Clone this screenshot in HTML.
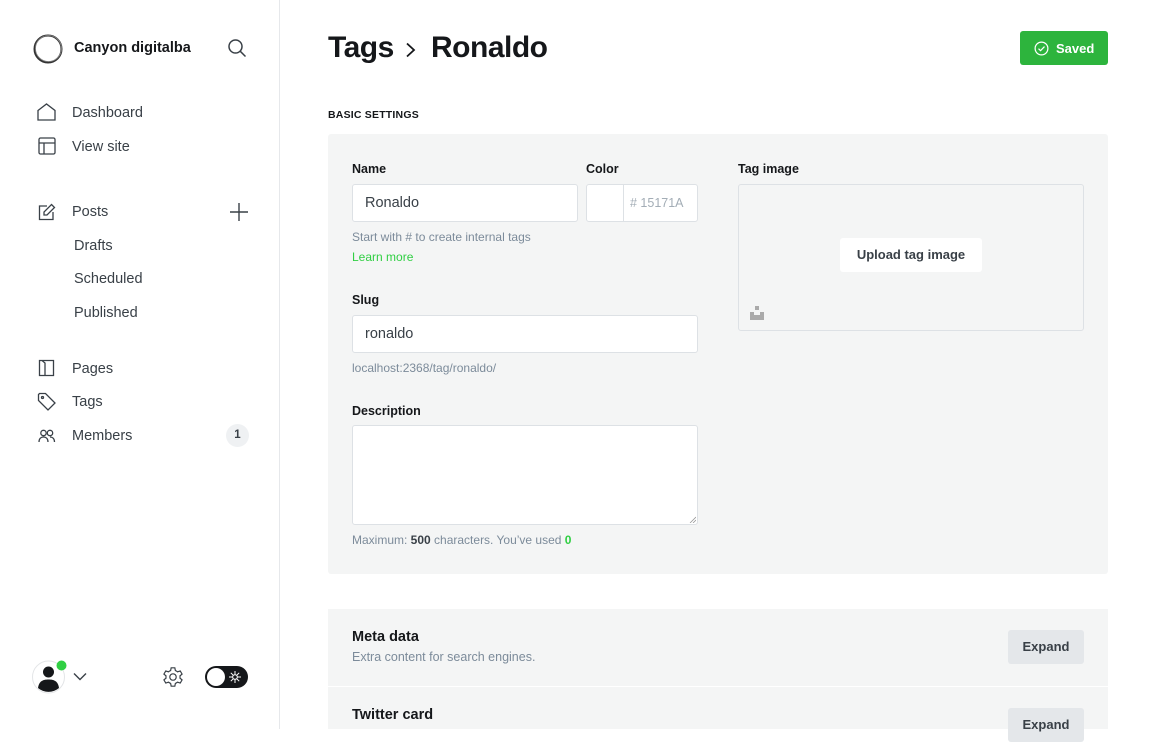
<!DOCTYPE html>
<html><head><meta charset="utf-8"><style>
*{box-sizing:border-box;margin:0;padding:0}
body{width:1156px;height:729px;overflow:hidden;background:#fff;font-family:"Liberation Sans",sans-serif;color:#15171a;position:relative}
.side{position:absolute;left:0;top:0;width:280px;height:729px;border-right:1px solid #e6e8eb}
.abs{position:absolute}
.nav{position:absolute;left:72px;font-size:14.5px;color:#394047}
.sub{position:absolute;left:74px;font-size:14.5px;color:#394047}
svg.i{position:absolute;fill:none;stroke:#394047;stroke-width:1.3}
.lbl{position:absolute;font-size:12.5px;font-weight:bold;color:#15171a}
.inp{position:absolute;background:#fff;border:1px solid #dde1e5;border-radius:3px;font-size:14.5px;color:#394047;padding-left:12px;display:flex;align-items:center}
.hint{position:absolute;font-size:12px;color:#7c8b9a}
</style></head><body>
<div class="side">
  <svg class="abs" style="left:32px;top:33px" width="32" height="32" viewBox="0 0 32 32"><circle cx="16" cy="16" r="13.5" fill="none" stroke="#333" stroke-width="2"/><circle cx="16.5" cy="15.5" r="13" fill="none" stroke="#888" stroke-width="0.8"/></svg>
  <div class="abs" style="left:74px;top:40px;font-size:14.5px;font-weight:bold">Canyon digitalba</div>
  <svg class="i" style="left:227px;top:38px" width="20" height="20" viewBox="0 0 20 20"><circle cx="8.5" cy="8.5" r="6.5" stroke-width="1.5"/><path d="M13.3 13.3L18.5 18.5" stroke-width="1.5"/></svg>

  <svg class="i" style="left:37px;top:103px" width="19" height="18" viewBox="0 0 19 18"><path d="M1 7.5L9.5 1L18 7.5V17H1Z"/></svg>
  <div class="nav" style="top:105px">Dashboard</div>
  <svg class="i" style="left:38px;top:137px" width="18" height="18" viewBox="0 0 18 18"><rect x="1" y="1" width="16" height="16" rx="1.5"/><path d="M1 6H17M6 6V17"/></svg>
  <div class="nav" style="top:139px">View site</div>

  <svg class="i" style="left:38px;top:203px" width="18" height="18" viewBox="0 0 18 18"><path d="M9 3H1.5V16.5H15V9"/><path d="M13.5 1.5L16.5 4.5L9 12H6V9Z"/></svg>
  <div class="nav" style="top:204px">Posts</div>
  <svg class="i" style="left:229px;top:202px" width="20" height="20" viewBox="0 0 20 20"><path d="M10 1V19M1 10H19" stroke-width="1.4"/></svg>
  <div class="sub" style="top:238px">Drafts</div>
  <div class="sub" style="top:271px">Scheduled</div>
  <div class="sub" style="top:305px">Published</div>

  <svg class="i" style="left:38px;top:359px" width="17" height="18" viewBox="0 0 17 18"><path d="M1.5 1.5H15.5V16.5H1.5Z"/><path d="M4 1.5L7 4V17"/></svg>
  <div class="nav" style="top:361px">Pages</div>
  <svg class="i" style="left:37px;top:392px" width="20" height="20" viewBox="0 0 20 20"><path d="M1.5 2.5V8.5L11 18L18 11L8.5 1.5H2.5Z"/><circle cx="5.5" cy="5.5" r="1"/></svg>
  <div class="nav" style="top:394px">Tags</div>
  <svg class="i" style="left:38px;top:428px" width="18" height="16" viewBox="0 0 18 16"><circle cx="5.5" cy="5" r="2.7"/><path d="M1 14C1 10.5 3 9 5.5 9S10 10.5 10 14"/><circle cx="12" cy="5" r="2.7"/><path d="M12 9C14.5 9 16.5 10.5 16.5 14"/></svg>
  <div class="nav" style="top:428px">Members</div>
  <div class="abs" style="left:226px;top:424px;width:23px;height:23px;border-radius:12px;background:#eff1f3;font-size:11.5px;font-weight:bold;color:#394047;text-align:center;line-height:23px">1</div>

  <svg class="abs" style="left:32px;top:660px" width="36" height="34" viewBox="0 0 36 34"><circle cx="16.5" cy="17" r="16" fill="#fff" stroke="#e3e5e7"/><circle cx="16.5" cy="12" r="5.5" fill="#15171a"/><path d="M6 28C7 21 11 19.5 16.5 19.5S26 21 27 28A16 16 0 0 1 6 28Z" fill="#15171a"/><circle cx="29.5" cy="5.5" r="5" fill="#30cf43"/></svg>
  <svg class="i" style="left:73px;top:672px" width="14" height="9" viewBox="0 0 14 9"><path d="M1 1.5L7 7.5L13 1.5" stroke-width="1.4"/></svg>
  <svg class="i" style="left:162px;top:666px" width="22" height="22" viewBox="0 0 24 24"><path d="M10 2H14L14.6 5A7.5 7.5 0 0 1 17 6.4L19.9 5.4L21.9 8.8L19.6 10.8A7.5 7.5 0 0 1 19.6 13.2L21.9 15.2L19.9 18.6L17 17.6A7.5 7.5 0 0 1 14.6 19L14 22H10L9.4 19A7.5 7.5 0 0 1 7 17.6L4.1 18.6L2.1 15.2L4.4 13.2A7.5 7.5 0 0 1 4.4 10.8L2.1 8.8L4.1 5.4L7 6.4A7.5 7.5 0 0 1 9.4 5Z"/><circle cx="12" cy="12" r="3.5"/></svg>
  <div class="abs" style="left:205px;top:666px;width:43px;height:22px;border-radius:11px;background:#15171a"></div>
  <div class="abs" style="left:207px;top:668px;width:18px;height:18px;border-radius:9px;background:#fff"></div>
  <svg class="abs" style="left:229px;top:671px" width="12" height="12" viewBox="0 0 12 12"><path d="M6 0V12M0 6H12M1.8 1.8L10.2 10.2M10.2 1.8L1.8 10.2" stroke="#fff" stroke-width="1"/><circle cx="6" cy="6" r="2.3" fill="#15171a" stroke="#fff"/></svg>
</div>

<div class="abs" style="left:328px;top:31px;font-size:30px;font-weight:bold;letter-spacing:-0.5px">Tags</div>
<svg class="abs" style="left:405px;top:42px" width="12" height="16" viewBox="0 0 12 16"><path d="M2 1.5L9 8L2 14.5" fill="none" stroke="#15171a" stroke-width="1.8"/></svg>
<div class="abs" style="left:431px;top:31px;font-size:30px;font-weight:bold;letter-spacing:-0.5px">Ronaldo</div>
<div class="abs" style="left:1020px;top:31px;width:88px;height:34px;border-radius:3px;background:#2db43d;color:#fff;font-size:13px;font-weight:bold;display:flex;align-items:center;padding-left:14px">
  <svg width="15" height="15" viewBox="0 0 16 16" style="margin-right:7px"><circle cx="8" cy="8" r="6.8" fill="none" stroke="#fff" stroke-width="1.3"/><path d="M4.8 8.2L7 10.3L11.2 5.9" fill="none" stroke="#fff" stroke-width="1.3"/></svg>Saved</div>

<div class="abs" style="left:328px;top:109px;font-size:10.5px;font-weight:bold;letter-spacing:0.2px">BASIC SETTINGS</div>
<div class="abs" style="left:328px;top:134px;width:780px;height:440px;background:#f4f5f5;border-radius:3px"></div>

<div class="lbl" style="left:352px;top:162px">Name</div>
<div class="inp" style="left:352px;top:184px;width:226px;height:38px">Ronaldo</div>
<div class="hint" style="left:352px;top:230px">Start with # to create internal tags</div>
<div class="hint" style="left:352px;top:250px;color:#30cf43">Learn more</div>
<div class="lbl" style="left:586px;top:162px">Color</div>
<div class="inp" style="left:586px;top:184px;width:112px;height:38px;padding:0"><div style="width:37px;height:100%;border-right:1px solid #dde1e5"></div><span style="font-size:12.5px;color:#a3adb6;padding-left:6px">#&nbsp;15171A</span></div>

<div class="lbl" style="left:352px;top:293px">Slug</div>
<div class="inp" style="left:352px;top:315px;width:346px;height:38px">ronaldo</div>
<div class="hint" style="left:352px;top:361px">localhost:2368/tag/ronaldo/</div>

<div class="lbl" style="left:352px;top:404px">Description</div>
<div class="inp" style="left:352px;top:425px;width:346px;height:100px"></div>
<svg class="abs" style="left:689px;top:516px" width="7" height="7" viewBox="0 0 7 7"><path d="M1 7L7 1M4 7L7 4" stroke="#999" stroke-width="0.8"/></svg>
<div class="hint" style="left:352px;top:533px">Maximum: <b style="color:#394047">500</b> characters. You’ve used <b style="color:#30cf43">0</b></div>

<div class="lbl" style="left:738px;top:162px">Tag image</div>
<div class="abs" style="left:738px;top:184px;width:346px;height:147px;border:1px solid #dde1e5;border-radius:3px;background:#f4f5f5"></div>
<div class="abs" style="left:840px;top:238px;width:142px;height:34px;background:#fff;border-radius:3px;font-size:13px;font-weight:bold;color:#394047;text-align:center;line-height:34px">Upload tag image</div>
<svg class="abs" style="left:750px;top:306px" width="15" height="14" viewBox="0 0 15 14"><rect x="5" y="0" width="4" height="4" fill="#aaa"/><path d="M0 6H4V9H10V6H14V14H0Z" fill="#aaa"/></svg>

<div class="abs" style="left:328px;top:609px;width:780px;height:77px;background:#f4f5f5"></div>
<div class="abs" style="left:352px;top:629px;font-size:14.5px;font-weight:bold">Meta data</div>
<div class="hint" style="left:352px;top:650px;font-size:12.5px">Extra content for search engines.</div>
<div class="abs" style="left:1008px;top:630px;width:76px;height:34px;background:#e4e7ea;border-radius:3px;font-size:13px;font-weight:bold;color:#394047;text-align:center;line-height:34px">Expand</div>

<div class="abs" style="left:328px;top:687px;width:780px;height:42px;background:#f4f5f5"></div>
<div class="abs" style="left:352px;top:707px;font-size:14.5px;font-weight:bold">Twitter card</div>
<div class="abs" style="left:1008px;top:708px;width:76px;height:34px;background:#e4e7ea;border-radius:3px;font-size:13px;font-weight:bold;color:#394047;text-align:center;line-height:34px">Expand</div>
</body></html>
